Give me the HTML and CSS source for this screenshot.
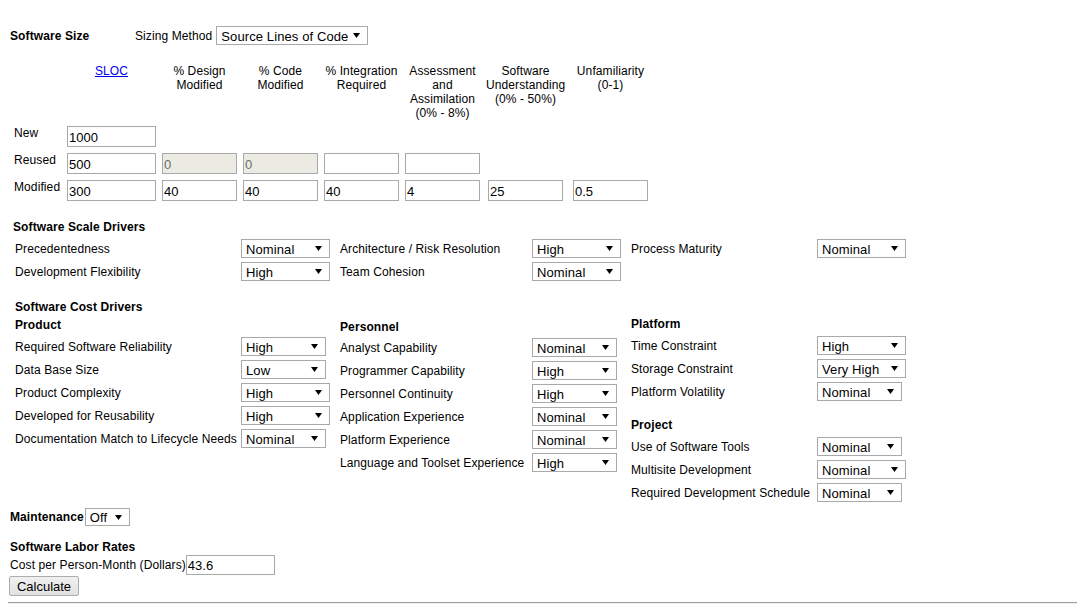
FILE: index.html
```html
<!DOCTYPE html>
<html lang="en">
<head>
<meta charset="utf-8">
<title>COCOMO II</title>
<link rel="stylesheet" href="styles.css">
</head>
<body>
<form class="page">
  <div class="size-head">
    <span class="title size-title">Software Size</span>
    <span class="sizing-label">Sizing Method</span>
    <select class="sel sel-method"><option>Source Lines of Code</option></select>
  </div>

  <div class="size-grid">
    <div></div>
    <div class="colhead"><a href="#" class="link">SLOC</a></div>
    <div class="colhead">% Design<br>Modified</div>
    <div class="colhead">% Code<br>Modified</div>
    <div class="colhead">% Integration<br>Required</div>
    <div class="colhead">Assessment<br>and<br>Assimilation<br>(0% - 8%)</div>
    <div class="colhead">Software<br>Understanding<br>(0% - 50%)</div>
    <div class="colhead">Unfamiliarity<br>(0-1)</div>

    <div class="row-label">New</div>
    <input class="num wide" type="text" value="1000">
    <div class="filler"></div>

    <div class="row-label">Reused</div>
    <input class="num wide" type="text" value="500">
    <input class="num" type="text" value="0" disabled>
    <input class="num" type="text" value="0" disabled>
    <input class="num" type="text" value="">
    <input class="num" type="text" value="">
    <div class="filler2"></div>

    <div class="row-label">Modified</div>
    <input class="num wide" type="text" value="300">
    <input class="num" type="text" value="40">
    <input class="num" type="text" value="40">
    <input class="num" type="text" value="40">
    <input class="num" type="text" value="4">
    <input class="num" type="text" value="25">
    <input class="num" type="text" value="0.5">
  </div>

  <div class="title scale-title">Software Scale Drivers</div>
  <div class="scale-grid">
    <span class="lbl">Precedentedness</span>
    <select class="sel w89"><option>Nominal</option></select>
    <span class="lbl">Architecture / Risk Resolution</span>
    <select class="sel w89"><option>High</option></select>
    <span class="lbl">Process Maturity</span>
    <select class="sel w89"><option>Nominal</option></select>

    <span class="lbl">Development Flexibility</span>
    <select class="sel w89"><option>High</option></select>
    <span class="lbl">Team Cohesion</span>
    <select class="sel w89"><option>Nominal</option></select>
  </div>

  <div class="title cost-title">Software Cost Drivers</div>
  <div class="cost">
    <div class="col col-product">
      <div class="title sub">Product</div>
      <div class="rows rows-product">
        <span class="lbl">Required Software Reliability</span>
        <select class="sel w85"><option>High</option></select>
        <span class="lbl">Data Base Size</span>
        <select class="sel w85"><option>Low</option></select>
        <span class="lbl">Product Complexity</span>
        <select class="sel w89"><option>High</option></select>
        <span class="lbl">Developed for Reusability</span>
        <select class="sel w89"><option>High</option></select>
        <span class="lbl">Documentation Match to Lifecycle Needs</span>
        <select class="sel w85"><option>Nominal</option></select>
      </div>
    </div>

    <div class="col col-personnel">
      <div class="title sub sub-personnel">Personnel</div>
      <div class="rows rows-personnel">
        <span class="lbl">Analyst Capability</span>
        <select class="sel w85"><option>Nominal</option></select>
        <span class="lbl">Programmer Capability</span>
        <select class="sel w85"><option>High</option></select>
        <span class="lbl">Personnel Continuity</span>
        <select class="sel w85"><option>High</option></select>
        <span class="lbl">Application Experience</span>
        <select class="sel w85"><option>Nominal</option></select>
        <span class="lbl">Platform Experience</span>
        <select class="sel w85"><option>Nominal</option></select>
        <span class="lbl">Language and Toolset Experience</span>
        <select class="sel w85"><option>High</option></select>
      </div>
    </div>

    <div class="col col-platform">
      <div class="title sub">Platform</div>
      <div class="rows rows-platform">
        <span class="lbl">Time Constraint</span>
        <select class="sel w89"><option>High</option></select>
        <span class="lbl">Storage Constraint</span>
        <select class="sel w89"><option>Very High</option></select>
        <span class="lbl">Platform Volatility</span>
        <select class="sel w85"><option>Nominal</option></select>
      </div>
      <div class="title sub project">Project</div>
      <div class="rows rows-platform">
        <span class="lbl">Use of Software Tools</span>
        <select class="sel w85"><option>Nominal</option></select>
        <span class="lbl">Multisite Development</span>
        <select class="sel w89"><option>Nominal</option></select>
        <span class="lbl">Required Development Schedule</span>
        <select class="sel w85"><option>Nominal</option></select>
      </div>
    </div>
  </div>

  <div class="maint">
    <span class="title">Maintenance</span>
    <select class="sel sel-off"><option>Off</option></select>
  </div>

  <div class="title labor-title">Software Labor Rates</div>
  <div class="cost-row">
    <span>Cost per Person-Month (Dollars)</span><input class="num wide" type="text" value="43.6">
  </div>
  <div class="actions">
    <button type="button" class="btn">Calculate</button>
  </div>
  <hr class="rule">
</form>
</body>
</html>
```

FILE: styles.css
```css
html, body {
  margin: 0;
  padding: 0;
  background: #fff;
}

body {
  font-family: "Liberation Sans", Arial, sans-serif;
  font-size: 12px;
  letter-spacing: 0.1px;
  color: #000;
}

.page {
  margin: 0;
}

.title {
  font-weight: bold;
  line-height: 14px;
}

/* ---------- Software size ---------- */
.size-head {
  display: flex;
  align-items: center;
  height: 19px;
  margin-top: 26px;
  padding-left: 10px;
}

.size-title {
  width: 125px;
}

.sizing-label {
  margin-right: 4px;
}

.sel {
  -webkit-appearance: none;
  appearance: none;
  box-sizing: border-box;
  height: 19px;
  margin: 0;
  padding: 1px 0 0 4px;
  border: 1px solid #a9a9a9;
  border-radius: 0;
  background: #fff url("data:image/svg+xml,%3Csvg xmlns='http://www.w3.org/2000/svg' width='7' height='5'%3E%3Cpolygon points='0,0 7,0 3.5,5' fill='black'/%3E%3C/svg%3E") no-repeat right 7px center;
  font-family: "Liberation Sans", Arial, sans-serif;
  font-size: 13px;
  letter-spacing: 0.1px;
  color: #000;
}

.sel-method {
  width: 152px;
}

.w89 { width: 89px; }
.w85 { width: 85px; }

.size-grid {
  display: grid;
  grid-template-columns: 47px 89px 75px 75px 75px 75px 79px 79px;
  column-gap: 6px;
  row-gap: 6px;
  padding-left: 14px;
  margin-top: 19px;
  align-items: start;
}

.colhead {
  text-align: center;
  white-space: nowrap;
  line-height: 14px;
}

.link {
  color: #0000ee;
  text-decoration: underline;
}

.row-label {
  line-height: 14px;
  white-space: nowrap;
}

.filler { grid-column: span 6; }
.filler2 { grid-column: span 2; }

.num {
  box-sizing: border-box;
  width: 75px;
  height: 21px;
  margin: 0;
  padding: 1px 1px 0;
  border: 1px solid #a9a9a9;
  border-radius: 0;
  background: #fff;
  font-family: "Liberation Sans", Arial, sans-serif;
  font-size: 13px;
  color: #000;
  justify-self: center;
}

.num.wide {
  width: 89px;
}

.num:disabled {
  background: #ebebe4;
  color: #6d6d6d;
}

/* ---------- Scale drivers ---------- */
.scale-title {
  margin-top: 19px;
  padding-left: 13px;
}

.scale-grid {
  display: grid;
  grid-template-columns: 226px 99px 192px 99px 186px auto;
  row-gap: 4px;
  align-items: center;
  justify-items: start;
  padding-left: 15px;
  margin-top: 5px;
}

.lbl {
  white-space: nowrap;
}

/* ---------- Cost drivers ---------- */
.cost-title {
  margin-top: 19px;
  padding-left: 15px;
}

.cost {
  display: flex;
  align-items: flex-start;
  padding-left: 15px;
  margin-top: 4px;
}

.col-product { width: 325px; }
.col-personnel { width: 291px; margin-top: 2px; }
.col-platform { margin-top: -1px; }

.sub {
  margin-bottom: 5px;
}

.sub-personnel {
  margin-bottom: 4px;
}

.project {
  margin-top: 17px;
}

.rows {
  display: grid;
  row-gap: 4px;
  align-items: center;
  justify-items: start;
}

.rows-product { grid-template-columns: 226px auto; }
.rows-personnel { grid-template-columns: 192px auto; }
.rows-platform { grid-template-columns: 186px auto; }

/* ---------- Maintenance / labor ---------- */
.maint {
  display: flex;
  align-items: center;
  gap: 1px;
  height: 18px;
  padding-left: 10px;
  margin-top: 6px;
}

.sel-off {
  width: 45px;
  height: 18px;
}

.labor-title {
  margin-top: 14px;
  padding-left: 10px;
}

.cost-row {
  display: flex;
  align-items: center;
  padding-left: 10px;
  margin-top: 1px;
}

.cost-row .num {
  height: 20px;
}

.actions {
  padding-left: 9px;
  margin-top: 1px;
}

.btn {
  box-sizing: border-box;
  width: 70px;
  height: 20px;
  margin: 0;
  padding: 0;
  border: 1px solid #adadad;
  border-radius: 2px;
  background: linear-gradient(#f0f0f0, #e1e1e1);
  font-family: "Liberation Sans", Arial, sans-serif;
  font-size: 13px;
  color: #000;
}

.rule {
  margin: 6px 8px 0;
  border: 0;
  border-top: 1px solid #a0a0a0;
  border-bottom: 1px solid #eeeeee;
  height: 0;
}
```
